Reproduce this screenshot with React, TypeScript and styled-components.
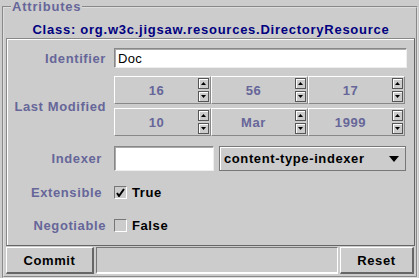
import React from 'react';
import styled, { createGlobalStyle } from 'styled-components';

const Global = createGlobalStyle`
  html, body { margin: 0; padding: 0; background: #cccccc; }
  body {
    width: 419px; height: 278px; overflow: hidden;
    font-family: "Liberation Sans", Arial, Helvetica, sans-serif;
    font-size: 13px;
  }
  * { box-sizing: border-box; }
`;

const Frame = styled.fieldset`
  margin: 0 1px 0 2px;
  padding: 0 0 1px 2px;
  height: 278px;
  border: 2px groove #dddddd;
  display: flex;
  flex-direction: column;
`;

const Legend = styled.legend`
  margin-left: 5px;
  padding: 0 1px;
  color: #666699;
  font: bold 13px/13px "Liberation Sans", Arial, sans-serif;
  letter-spacing: 0.8px;
`;

const ClassLabel = styled.div`
  color: #000080;
  font-weight: bold;
  font-size: 13px;
  line-height: 15px;
  text-align: center;
  letter-spacing: 0.75px;
  padding: 9px 0 1px 0;
`;

const Panel = styled.div`
  border-top: 1px solid #888888;
  border-left: 1px solid #888888;
  border-bottom: 1px solid #666666;
  border-right: 1px solid #666666;
  box-shadow: inset 1px 1px 0 #ffffff;
  height: 208px;
  margin-right: 1px;
  padding: 9px 0 0 0;
  display: flex;
  flex-direction: column;
`;

const Row = styled.div<{ $mt?: number; $h: number }>`
  display: grid;
  grid-template-columns: 107px 1fr;
  align-items: center;
  margin-top: ${(p) => p.$mt ?? 0}px;
  height: ${(p) => p.$h}px;
`;

const Label = styled.div<{ $pr?: number }>`
  color: #666699;
  font-weight: bold;
  letter-spacing: 0.6px;
  text-align: right;
  padding-right: ${(p) => p.$pr ?? 8}px;
  white-space: nowrap;
`;

const Field = styled.div`
  display: flex;
  align-items: center;
`;

const TextInput = styled.div<{ $w: number; $h: number }>`
  width: ${(p) => p.$w}px;
  height: ${(p) => p.$h}px;
  background: #ffffff;
  border-top: 1px solid #888888;
  border-left: 1px solid #888888;
  border-bottom: 1px solid #eeeeee;
  border-right: 1px solid #eeeeee;
  box-shadow: inset 1px 1px 0 #aaaaaa;
  padding-left: 3px;
  display: flex;
  align-items: center;
  color: #000000;
  font-size: 13px;
  letter-spacing: 0.3px;
`;

const SpinGrid = styled.div`
  display: grid;
  grid-template-columns: 97px 97px 97px;
  grid-auto-rows: 28px;
  row-gap: 4px;
`;

const Spinner = styled.div`
  display: flex;
  align-items: center;
  border-top: 1px solid #ffffff;
  border-left: 1px solid #ffffff;
  border-bottom: 1px solid #888888;
  border-right: 1px solid #888888;
  padding-right: 1px;
`;

const SpinValue = styled.div`
  flex: 1;
  text-align: center;
  color: #666699;
  font-weight: bold;
  letter-spacing: 0.6px;
`;

const SpinButtons = styled.div`
  display: flex;
  flex-direction: column;
  gap: 2px;
`;

const ArrowButton = styled.div`
  width: 11px;
  height: 11px;
  border: 1px solid #555555;
  box-shadow: inset 1px 1px 0 #ffffff;
  background: #cccccc;
  display: flex;
  align-items: center;
  justify-content: center;
`;

const Choice = styled.div`
  margin-left: 5px;
  width: 187px;
  height: 25px;
  border: 1px solid #777777;
  box-shadow: inset 1px 1px 0 #ffffff;
  display: flex;
  align-items: center;
  justify-content: space-between;
  padding: 0 6px 0 4px;
  font-weight: bold;
  letter-spacing: 0.6px;
  color: #000000;
`;

const CheckBox = styled.div`
  width: 13px;
  height: 13px;
  border-top: 1px solid #777777;
  border-left: 1px solid #777777;
  border-bottom: 1px solid #ffffff;
  border-right: 1px solid #ffffff;
  display: flex;
  align-items: center;
  justify-content: center;
`;

const CheckText = styled.span`
  margin-left: 5px;
  font-weight: bold;
  letter-spacing: 0.6px;
  color: #000000;
`;

const ButtonBar = styled.div`
  display: flex;
  gap: 2px;
  margin-top: 1px;
  height: 27px;
  margin-right: 2px;
`;

const Button = styled.div<{ $w: number }>`
  width: ${(p) => p.$w}px;
  border-top: 1px solid #ffffff;
  border-left: 1px solid #ffffff;
  border-bottom: 2px solid #666666;
  border-right: 2px solid #666666;
  display: flex;
  align-items: center;
  justify-content: center;
  font-weight: bold;
  letter-spacing: 0.6px;
  color: #000000;
`;

const Status = styled.div`
  flex: 1;
  border-top: 1px solid #777777;
  border-left: 1px solid #777777;
  border-bottom: 2px solid #ffffff;
  border-right: 1px solid #ffffff;
`;

const Up = () => (
  <svg width="5" height="3" viewBox="0 0 5 3"><path d="M2.5 0 L5 3 L0 3 Z" fill="#000" /></svg>
);
const Down = () => (
  <svg width="5" height="3" viewBox="0 0 5 3"><path d="M0 0 L5 0 L2.5 3 Z" fill="#000" /></svg>
);

const Spin = ({ v }: { v: string }) => (
  <Spinner>
    <SpinValue>{v}</SpinValue>
    <SpinButtons>
      <ArrowButton><Up /></ArrowButton>
      <ArrowButton><Down /></ArrowButton>
    </SpinButtons>
  </Spinner>
);

export default function App() {
  return (
    <>
      <Global />
      <Frame>
        <Legend>Attributes</Legend>
        <ClassLabel>Class: org.w3c.jigsaw.resources.DirectoryResource</ClassLabel>
        <Panel>
          <Row $h={20}>
            <Label>Identifier</Label>
            <Field>
              <TextInput $w={293} $h={20}>Doc</TextInput>
            </Field>
          </Row>
          <Row $mt={8} $h={60}>
            <Label>Last Modified</Label>
            <Field>
              <SpinGrid>
                <Spin v="16" />
                <Spin v="56" />
                <Spin v="17" />
                <Spin v="10" />
                <Spin v="Mar" />
                <Spin v="1999" />
              </SpinGrid>
            </Field>
          </Row>
          <Row $mt={10} $h={25}>
            <Label $pr={12}>Indexer</Label>
            <Field>
              <TextInput $w={100} $h={25} />
              <Choice>
                <span>content-type-indexer</span>
                <svg width="10" height="6" viewBox="0 0 10 6"><path d="M0 0 L10 0 L5 6 Z" fill="#000" /></svg>
              </Choice>
            </Field>
          </Row>
          <Row $mt={14} $h={13}>
            <Label $pr={12}>Extensible</Label>
            <Field>
              <CheckBox>
                <svg width="9" height="9" viewBox="0 0 9 9"><path d="M1 5 L3 8 L8 1" stroke="#000" strokeWidth="2" fill="none" /></svg>
              </CheckBox>
              <CheckText>True</CheckText>
            </Field>
          </Row>
          <Row $mt={20} $h={13}>
            <Label>Negotiable</Label>
            <Field>
              <CheckBox />
              <CheckText>False</CheckText>
            </Field>
          </Row>
        </Panel>
        <ButtonBar>
          <Button $w={88}>Commit</Button>
          <Status />
          <Button $w={74}>Reset</Button>
        </ButtonBar>
      </Frame>
    </>
  );
}
